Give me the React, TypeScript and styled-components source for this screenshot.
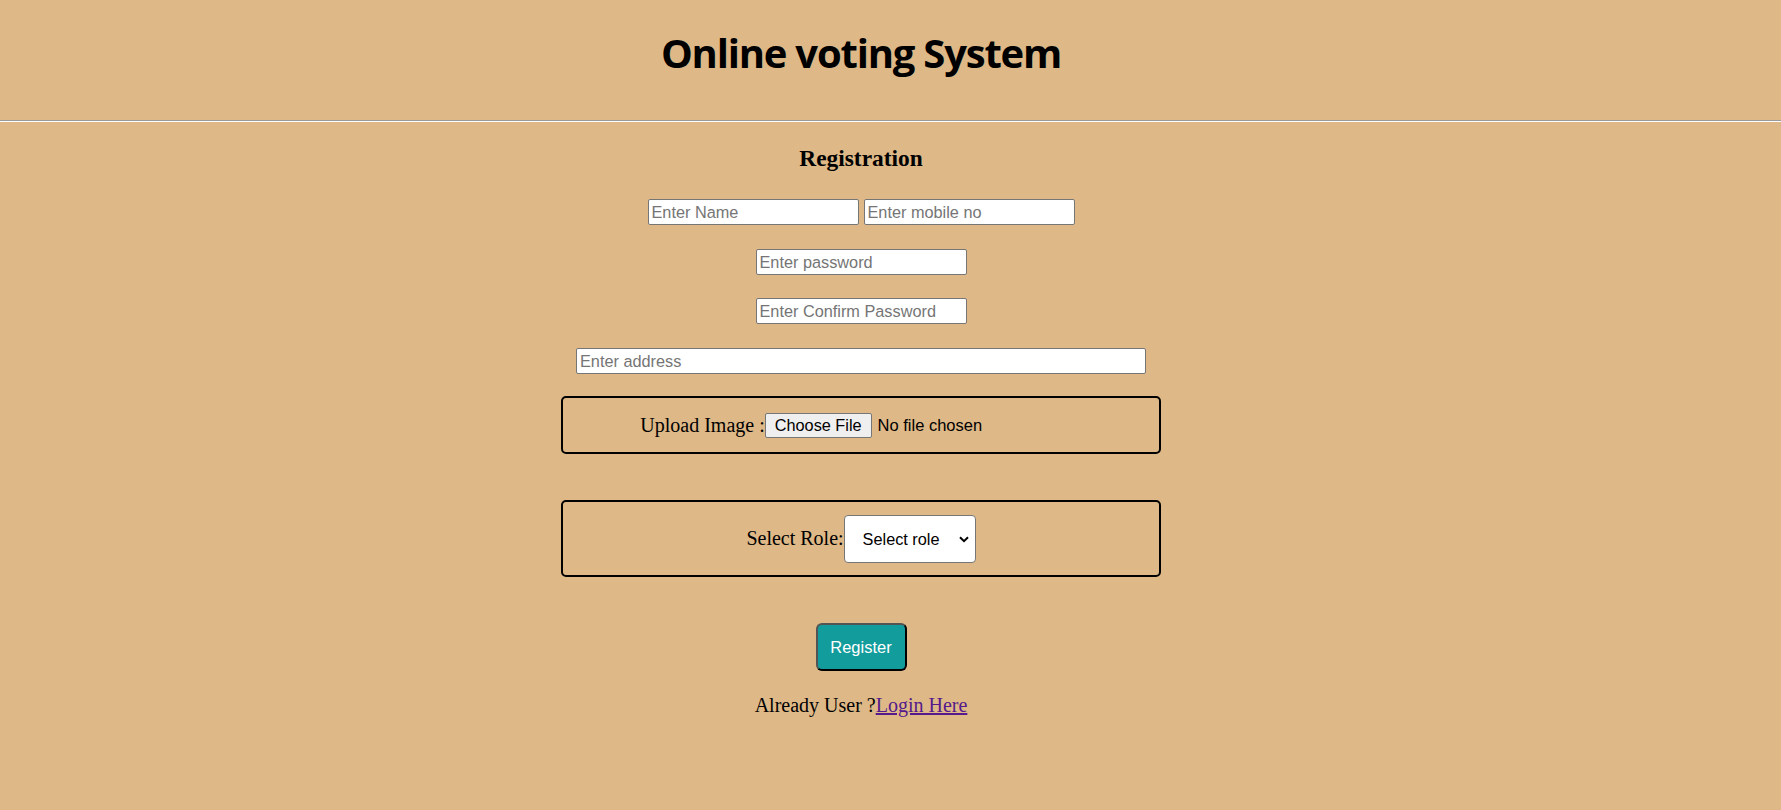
import React from "react";
import styled, { createGlobalStyle } from "styled-components";

const GlobalStyle = createGlobalStyle`
  html, body {
    margin: 0;
    padding: 0;
    background: #deb887;
  }
  body {
    font-family: "Liberation Serif", "Times New Roman", serif;
    font-size: 20px;
    color: #000;
  }
`;

const Page = styled.div`
  min-height: 100vh;
  background: #deb887;
`;

const Header = styled.header`
  height: 120px;
  box-sizing: border-box;
  padding: 26px 59px 0 0;
  text-align: center;
`;

const Title = styled.h1`
  margin: 0;
  font-family: "Open Sans", "Noto Sans", sans-serif;
  font-weight: 700;
  font-size: 40px;
  line-height: 54px;
  letter-spacing: -1.2px;
`;

const Divider = styled.hr`
  margin: 0;
  height: 0;
  border: 0;
  border-top: 1px solid #9a9a9a;
  border-bottom: 1px solid #ffffff;
`;

const Main = styled.main`
  display: flex;
  flex-direction: column;
  align-items: center;
  padding: 23px 59px 40px 0;
`;

const Heading = styled.h3`
  margin: 0 0 27px;
  font-size: 23.4px;
  line-height: 27px;
  font-weight: 700;
`;

const FieldRow = styled.div<{ $after?: number }>`
  display: flex;
  gap: 5px;
  margin-bottom: ${(p) => (p.$after ?? 24)}px;
`;

const TextInput = styled.input<{ $w: number }>`
  width: ${(p) => p.$w}px;
  height: 26px;
  box-sizing: border-box;
  padding: 1px 3px;
  border: 1px solid #767676;
  border-radius: 2px;
  background: #fff;
  font-family: "Liberation Sans", Arial, sans-serif;
  font-size: 16.3px;
  color: #000;
  outline: none;
  &::placeholder {
    color: #757575;
  }
`;

const Panel = styled.div<{ $h: number }>`
  width: 600px;
  height: ${(p) => p.$h}px;
  box-sizing: border-box;
  border: 2px solid #000;
  border-radius: 5px;
  display: flex;
  align-items: center;
  justify-content: center;
  margin-bottom: 46px;
`;

const PanelLabel = styled.span`
  font-size: 20px;
  line-height: 23px;
  white-space: pre;
`;

const FileInput = styled.input`
  width: 317px;
  font-family: "Liberation Sans", Arial, sans-serif;
  font-size: 16.5px;
  line-height: 19px;
  color: #000;
  &::file-selector-button {
    font-family: "Liberation Sans", Arial, sans-serif;
    font-size: 16.3px;
    line-height: 19px;
    padding: 2px 9px;
    margin-right: 6px;
    border: 1px solid #767676;
    border-radius: 2px;
    background: #efefef;
    color: #000;
  }
`;

const SelectWrap = styled.span`
  position: relative;
  display: inline-flex;
`;

const RoleSelect = styled.select`
  appearance: none;
  -webkit-appearance: none;
  width: 132px;
  height: 48px;
  box-sizing: border-box;
  padding: 0 0 0 18px;
  border: 1px solid #767676;
  border-radius: 4px;
  background: #fff;
  font-family: "Liberation Sans", Arial, sans-serif;
  font-size: 16.3px;
  color: #000;
  outline: none;
`;

const Chevron = styled.svg`
  position: absolute;
  right: 7px;
  top: 50%;
  width: 10px;
  height: 7px;
  margin-top: -3px;
  pointer-events: none;
`;

const RegisterButton = styled.button`
  width: 91px;
  height: 48px;
  box-sizing: border-box;
  border: 2px outset #000;
  border-radius: 6px;
  background: #139c9c;
  color: #fff;
  font-family: "Liberation Sans", Arial, sans-serif;
  font-size: 16.5px;
  padding: 0;
  margin-bottom: 23px;
  cursor: pointer;
`;

const Footer = styled.p`
  margin: 0;
  font-size: 20px;
  line-height: 23px;
`;

const LoginLink = styled.a`
  color: #551a8b;
  text-decoration: underline;
`;

export default function App() {
  return (
    <Page>
      <GlobalStyle />
      <Header>
        <Title>Online voting System</Title>
      </Header>
      <Divider />
      <Main>
        <Heading>Registration</Heading>
        <FieldRow>
          <TextInput $w={211} type="text" placeholder="Enter Name" />
          <TextInput $w={211} type="text" placeholder="Enter mobile no" />
        </FieldRow>
        <FieldRow $after={23}>
          <TextInput $w={211} type="password" placeholder="Enter password" />
        </FieldRow>
        <FieldRow>
          <TextInput $w={211} type="password" placeholder="Enter Confirm Password" />
        </FieldRow>
        <FieldRow $after={22}>
          <TextInput $w={570} type="text" placeholder="Enter address" />
        </FieldRow>
        <Panel $h={58}>
          <PanelLabel>Upload Image :</PanelLabel>
          <FileInput type="file" />
        </Panel>
        <Panel $h={77}>
          <PanelLabel>Select Role:</PanelLabel>
          <SelectWrap>
            <RoleSelect defaultValue="">
              <option value="">Select role</option>
              <option value="voter">Voter</option>
              <option value="group">Group</option>
            </RoleSelect>
            <Chevron viewBox="0 0 10 7">
              <path d="M1 1.2 L5 5.2 L9 1.2" fill="none" stroke="#000" strokeWidth="2" />
            </Chevron>
          </SelectWrap>
        </Panel>
        <RegisterButton type="button">Register</RegisterButton>
        <Footer>
          Already User ?<LoginLink href="#">Login Here</LoginLink>
        </Footer>
      </Main>
    </Page>
  );
}
